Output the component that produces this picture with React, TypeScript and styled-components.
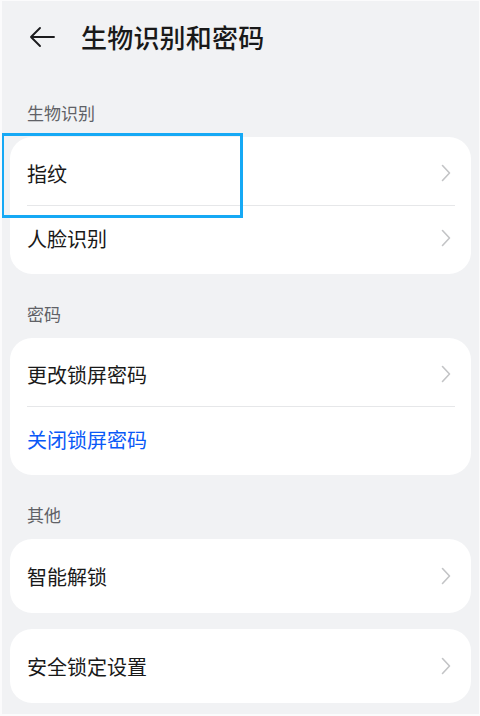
import React, { FC } from 'react';
import styled, { createGlobalStyle } from 'styled-components';

const GlobalStyle = createGlobalStyle`
  html, body {
    margin: 0;
    padding: 0;
    background: #f1f2f4;
  }
  body {
    font-family: "Noto Sans CJK SC", "Noto Sans", sans-serif;
    -webkit-font-smoothing: antialiased;
  }
`;

type Item = { label: string; link?: boolean; chevron?: boolean };
type Group = { title?: string; items: Item[] };

const groups: Group[] = [
  { title: '生物识别', items: [{ label: '指纹', chevron: true }, { label: '人脸识别', chevron: true }] },
  { title: '密码', items: [{ label: '更改锁屏密码', chevron: true }, { label: '关闭锁屏密码', link: true }] },
  { title: '其他', items: [{ label: '智能解锁', chevron: true }] },
  { items: [{ label: '安全锁定设置', chevron: true }] },
];

const Page = styled.div`
  position: relative;
  box-sizing: border-box;
  width: 480px;
  height: 716px;
  overflow: hidden;
  background: #f1f2f4;
  border-style: solid;
  border-color: #fbfbfc;
  border-width: 1px 1px 2px 2px;
  padding: 0 8px 0 8px;
`;

const Header = styled.header`
  box-sizing: border-box;
  display: flex;
  align-items: center;
  height: 75px;
  padding: 0 0 4px 17px;
  gap: 24px;
`;

const BackButton = styled.button`
  display: flex;
  align-items: center;
  justify-content: center;
  width: 30px;
  height: 30px;
  padding: 0;
  border: none;
  background: none;
  color: #1c1c1e;
`;

const Title = styled.h1`
  margin: 0;
  font-size: 26px;
  font-weight: 500;
  color: #191919;
  letter-spacing: 0.2px;
`;

const SectionLabel = styled.div<{ $top: number }>`
  padding: ${(p) => p.$top}px 0 12px 17px;
  height: 24px;
  line-height: 24px;
  font-size: 17px;
  color: #606166;
`;

const Card = styled.div<{ $gap: boolean; $single: boolean }>`
  margin-top: ${(p) => (p.$gap ? 16 : 0)}px;
  background: #ffffff;
  border-radius: 22px;
  padding: ${(p) => (p.$single ? 5 : 4)}px 0;
`;

const Row = styled.div<{ $link?: boolean }>`
  display: flex;
  align-items: center;
  justify-content: space-between;
  height: 64px;
  padding: 0 20px 0 17px;
  font-size: 20px;
  color: ${(p) => (p.$link ? '#0a59f7' : '#191919')};
`;

const Divider = styled.div`
  height: 1px;
  margin: 0 16px 0 17px;
  background: #e6e7e9;
`;

const Highlight = styled.div`
  position: absolute;
  left: -1px;
  top: 132px;
  width: 236px;
  height: 79px;
  border: 3px solid #16a9f5;
  pointer-events: none;
`;

const BackIcon: FC = () => (
  <svg width="28" height="22" viewBox="0 0 28 22" fill="none">
    <path d="M26 11H3M12 2L3 11l9 9" stroke="currentColor" strokeWidth="1.9" strokeLinecap="round" strokeLinejoin="round" />
  </svg>
);

const Chevron: FC = () => (
  <svg width="10" height="18" viewBox="0 0 10 18" fill="none">
    <path d="M1.5 1.5L8.5 9l-7 7.5" stroke="#c3c4c6" strokeWidth="1.6" strokeLinecap="round" strokeLinejoin="round" />
  </svg>
);

const App: FC = () => (
  <Page>
    <GlobalStyle />
    <Header>
      <BackButton aria-label="back">
        <BackIcon />
      </BackButton>
      <Title>生物识别和密码</Title>
    </Header>
    {groups.map((g, gi) => (
      <React.Fragment key={gi}>
        {g.title ? <SectionLabel $top={gi === 0 ? 25 : 28}>{g.title}</SectionLabel> : null}
        <Card $gap={!g.title} $single={g.items.length === 1}>
          {g.items.map((it, i) => (
            <React.Fragment key={it.label}>
              {i > 0 ? <Divider /> : null}
              <Row $link={it.link}>
                <span>{it.label}</span>
                {it.chevron ? <Chevron /> : null}
              </Row>
            </React.Fragment>
          ))}
        </Card>
      </React.Fragment>
    ))}
    <Highlight />
  </Page>
);

export default App;
